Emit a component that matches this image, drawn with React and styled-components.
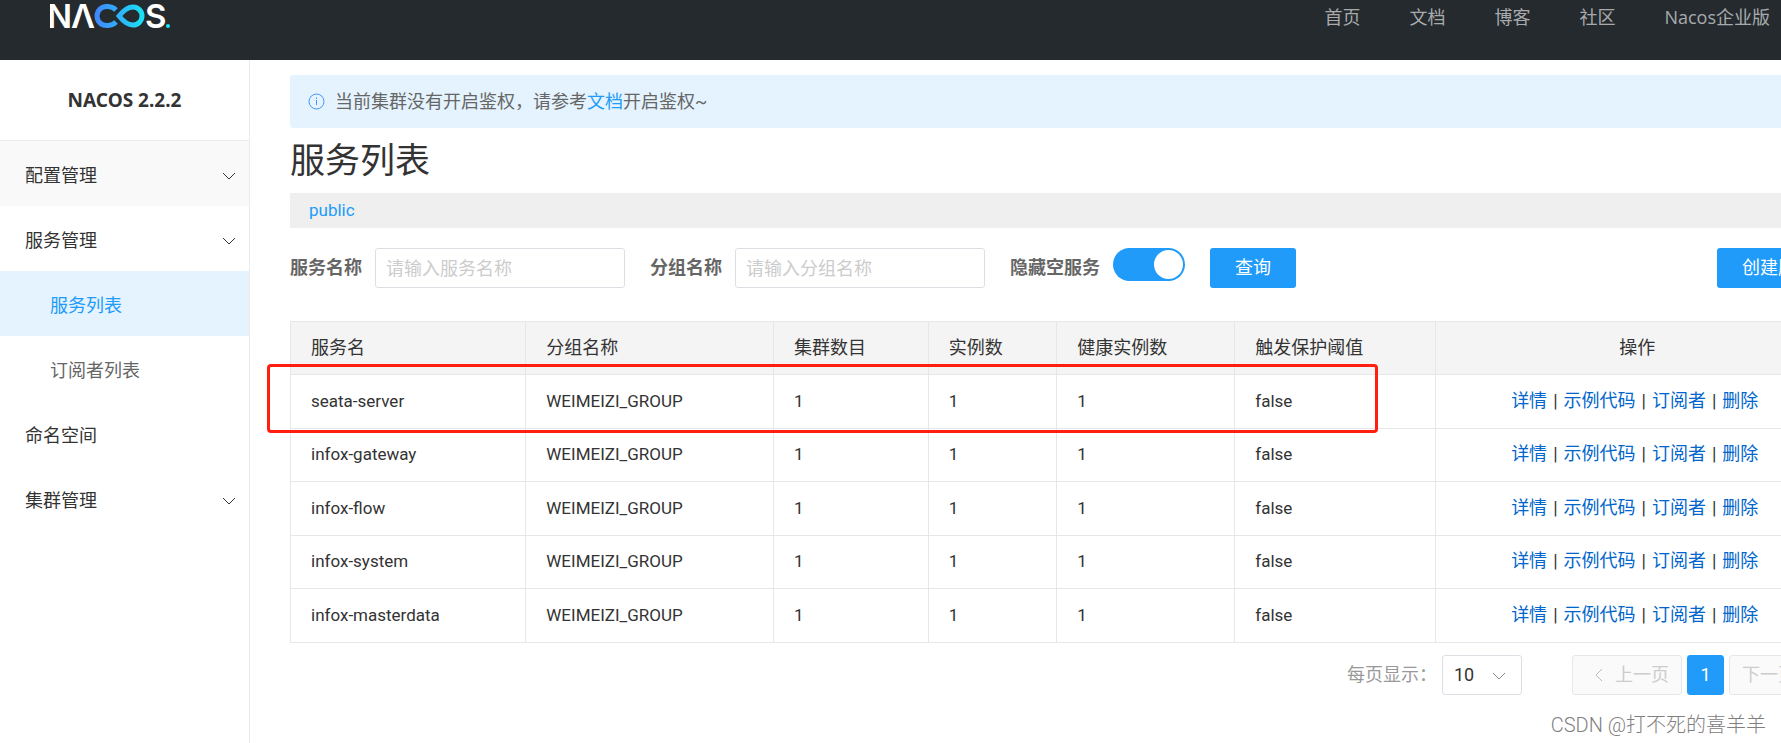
import styled, { createGlobalStyle } from "styled-components";

const GlobalStyle = createGlobalStyle`
    * {
        box-sizing: border-box;
    }
    body {
        margin: 0;
        overflow: hidden;
        background: #fff;
        color: #333;
        font-family: Roboto, 'Noto Sans CJK SC', sans-serif;
        font-size: 18px;
        font-weight: 400;
        line-height: 24px;
    }
    button, input, select {
        font: inherit;
    }
    a {
        text-decoration: none;
    }
`;

const Page = styled.div`
    position: relative;
    display: flex;
    flex-direction: column;
    min-height: 100vh;
    overflow: hidden;
`;

const Header = styled.header`
    display: flex;
    justify-content: space-between;
    align-items: flex-start;
    height: 60px;
    padding: 4px 11px 0 50px;
    background: #252a2f;
`;

const Nav = styled.nav`
    display: flex;
    gap: 49px;
    padding-top: 1px;
    a {
        color: #a8aaac;
        font-family: 'Open Sans', 'Noto Sans CJK SC', sans-serif;
    }
`;

const Body = styled.div`
    display: flex;
    flex: 1;
    width: calc(100% + 98px);
`;

const Sidebar = styled.aside`
    flex: none;
    width: 250px;
    border-right: 1px solid #ebebeb;
`;

const Version = styled.h1`
    margin: 0;
    height: 81px;
    border-bottom: 1px solid #ebebeb;
    font-family: 'Noto Sans', sans-serif;
    font-size: 19px;
    font-weight: 700;
    line-height: 80px;
    text-align: center;
`;

const Menu = styled.ul`
    margin: 0;
    padding: 0;
    list-style: none;
`;

const MenuLink = styled.a`
    display: flex;
    justify-content: space-between;
    align-items: center;
    height: 65px;
    padding: 4px 13px 0 ${(props) => (props.$sub ? "50px" : "25px")};
    background: ${(props) => (props.$active ? "#e4f3fe" : props.$shaded ? "#f9f9f9" : "#fff")};
    color: ${(props) => (props.$active ? "#209bfa" : props.$sub ? "#666" : "#333")};
`;

const Main = styled.main`
    flex: 1;
    min-width: 0;
    padding: 15px 40px 0;
`;

const Notice = styled.div`
    display: flex;
    align-items: center;
    gap: 10px;
    height: 53px;
    padding: 0 18px;
    border-radius: 3px;
    background: #e4f3fe;
    color: #666;
    a {
        color: #209bfa;
    }
`;

const Title = styled.h2`
    margin: 0;
    height: 65px;
    font-size: 35px;
    font-weight: 400;
    line-height: 68px;
`;

const Namespace = styled.div`
    height: 35px;
    padding: 0 19px;
    background: #efefef;
    color: #209bfa;
    font-size: 17px;
    line-height: 34px;
`;

const Search = styled.form`
    display: flex;
    align-items: flex-start;
    gap: 25px;
    margin: 20px 0 33px;
`;

const Field = styled.div`
    display: flex;
    label {
        width: ${(props) => (props.$wide ? "103px" : "85px")};
        color: #666;
        font-weight: 700;
        line-height: 40px;
        white-space: nowrap;
    }
`;

const TextInput = styled.input`
    width: 250px;
    height: 40px;
    padding: 0 10px;
    border: 1px solid #dcdee3;
    border-radius: 3px;
    outline: none;
    &::placeholder {
        color: #ccc;
    }
`;

const Switch = styled.input`
    appearance: none;
    display: flex;
    width: 72px;
    height: 33px;
    margin: 0;
    padding: 2px;
    border-radius: 17px;
    background: #ccc;
    cursor: pointer;
    &::before {
        content: "";
        width: 29px;
        height: 29px;
        border-radius: 50%;
        background: #fff;
    }
    &:checked {
        justify-content: flex-end;
        background: #209bfa;
    }
`;

const Button = styled.button`
    height: 40px;
    margin-left: ${(props) => (props.$end ? "auto" : "0")};
    padding: 0 25px;
    border: none;
    border-radius: 3px;
    background: #209bfa;
    color: #fff;
    cursor: pointer;
`;

const TableWrap = styled.div`
    position: relative;
`;

const Table = styled.table`
    width: 100%;
    table-layout: fixed;
    border-collapse: collapse;
    th, td {
        height: 54px;
        padding: 0 20px;
        border: 1px solid #e6e7eb;
        text-align: left;
    }
    th {
        height: 53px;
        background: #f4f4f4;
        font-weight: 400;
    }
    td {
        padding-bottom: 2px;
        font-size: 17px;
    }
    tbody tr:nth-child(even) td {
        height: 53px;
    }
    th:last-child, td:last-child {
        font-size: 18px;
        text-align: center;
    }
    td:last-child {
        padding-right: 25px;
    }
    td a {
        color: #0066cc;
    }
`;

const Col = styled.col`
    width: ${(props) => props.$width};
`;

const Divider = styled.span`
    margin: 0 6px;
`;

const Highlight = styled.div`
    position: absolute;
    top: 43px;
    left: -23px;
    right: 461px;
    height: 69px;
    border: 3px solid #ff1e10;
    border-radius: 4px;
    pointer-events: none;
`;

const Footer = styled.div`
    display: flex;
    justify-content: flex-end;
    align-items: center;
    gap: 5px;
    padding-top: 12px;
    label {
        color: #999;
    }
`;

const SelectBox = styled.div`
    position: relative;
    margin-right: 45px;
    select {
        appearance: none;
        display: block;
        width: 80px;
        height: 40px;
        padding: 0 11px;
        border: 1px solid #dcdee3;
        border-radius: 3px;
        background: #fff;
        color: #333;
    }
    svg {
        position: absolute;
        top: 17px;
        right: 16px;
        pointer-events: none;
    }
`;

const PageButton = styled.button`
    display: flex;
    justify-content: ${(props) => (props.$current ? "center" : "space-between")};
    align-items: center;
    width: ${(props) => (props.$current ? "37px" : "110px")};
    height: 40px;
    padding: ${(props) => (props.$current ? "0" : props.$next ? "0 22px 0 12px" : "0 12px 0 22px")};
    border: 1px solid ${(props) => (props.$current ? "#209bfa" : "#e6e7eb")};
    border-radius: 3px;
    background: ${(props) => (props.$current ? "#209bfa" : "#fafafa")};
    color: ${(props) => (props.$current ? "#fff" : "#ccc")};
`;

const Watermark = styled.div`
    position: absolute;
    right: 15px;
    bottom: 6px;
    color: #808080;
    font-size: 20px;
    font-weight: 300;
`;

const columns = [
    { title: "服务名", width: "15.2%" },
    { title: "分组名称", width: "16%" },
    { title: "集群数目", width: "10%" },
    { title: "实例数", width: "8.3%" },
    { title: "健康实例数", width: "11.5%" },
    { title: "触发保护阈值", width: "13%" },
    { title: "操作", width: "26%" },
];

const services = ["seata-server", "infox-gateway", "infox-flow", "infox-system", "infox-masterdata"];

const menu = [
    { text: "配置管理", arrow: true, shaded: true },
    { text: "服务管理", arrow: true },
    { text: "服务列表", sub: true, active: true },
    { text: "订阅者列表", sub: true },
    { text: "命名空间" },
    { text: "集群管理", arrow: true },
];

function Logo() {
    return (
        <svg width="122" height="26" viewBox="0 0 122 26" role="img" aria-label="Nacos">
            <defs>
                <linearGradient id="loop" gradientUnits="userSpaceOnUse" x1="45" y1="0" x2="95" y2="0">
                    <stop offset="0" stopColor="#4285ff" />
                    <stop offset="1" stopColor="#18e4f5" />
                </linearGradient>
            </defs>
            <g fill="#fff" fontFamily="Inter" fontWeight="600" fontSize="33">
                <text x="-3" y="24">N</text>
                <text x="21" y="24">Λ</text>
                <text x="95" y="24">S</text>
            </g>
            <g fill="none" stroke="url(#loop)" strokeWidth="5">
                <path d="M66 6 C62 2 54 1 50 5 C46 9 46 15 50 19 C54 23 62 22 66 18" />
                <path d="M69 12 C73 7 77 3 83 3 C88 3 92 7 92 12 C92 17 88 21 83 21 C77 21 73 17 69 12 Z" />
            </g>
            <circle cx="118" cy="22" r="2" fill="#18e4f5" />
        </svg>
    );
}

function ChevronDown({ color }) {
    return (
        <svg width="14" height="8" viewBox="0 0 14 8" fill="none" stroke={color}>
            <path d="M1 1l6 6 6-6" />
        </svg>
    );
}

function App() {
    return (
        <Page>
            <GlobalStyle />
            <Header>
                <Logo />
                <Nav>
                    <a href="#home">首页</a>
                    <a href="#docs">文档</a>
                    <a href="#blog">博客</a>
                    <a href="#community">社区</a>
                    <a href="#enterprise">Nacos企业版</a>
                </Nav>
            </Header>
            <Body>
                <Sidebar>
                    <Version>NACOS 2.2.2</Version>
                    <Menu>
                        {menu.map((item) => (
                            <li key={item.text}>
                                <MenuLink href="#menu" $sub={item.sub} $active={item.active} $shaded={item.shaded}>
                                    {item.text}
                                    {item.arrow && <ChevronDown color="#333" />}
                                </MenuLink>
                            </li>
                        ))}
                    </Menu>
                </Sidebar>
                <Main>
                    <Notice>
                        <svg width="17" height="17" viewBox="0 0 17 17" fill="none" stroke="#4494f9">
                            <circle cx="8.5" cy="8.5" r="7.5" />
                            <path d="M8.5 4.5v1.5M8.5 7v5" />
                        </svg>
                        <span>当前集群没有开启鉴权，请参考<a href="#auth">文档</a>开启鉴权~</span>
                    </Notice>
                    <Title>服务列表</Title>
                    <Namespace>public</Namespace>
                    <Search onSubmit={(e) => e.preventDefault()}>
                        <Field>
                            <label htmlFor="service">服务名称</label>
                            <TextInput id="service" placeholder="请输入服务名称" />
                        </Field>
                        <Field>
                            <label htmlFor="group">分组名称</label>
                            <TextInput id="group" placeholder="请输入分组名称" />
                        </Field>
                        <Field $wide>
                            <label htmlFor="hide">隐藏空服务</label>
                            <Switch id="hide" type="checkbox" defaultChecked />
                        </Field>
                        <Button type="submit">查询</Button>
                        <Button type="button" $end>创建服务</Button>
                    </Search>
                    <TableWrap>
                        <Table>
                            <colgroup>
                                {columns.map((col) => (
                                    <Col key={col.title} $width={col.width} />
                                ))}
                            </colgroup>
                            <thead>
                                <tr>
                                    {columns.map((col) => (
                                        <th key={col.title}>{col.title}</th>
                                    ))}
                                </tr>
                            </thead>
                            <tbody>
                                {services.map((name) => (
                                    <tr key={name}>
                                        <td>{name}</td>
                                        <td>WEIMEIZI_GROUP</td>
                                        <td>1</td>
                                        <td>1</td>
                                        <td>1</td>
                                        <td>false</td>
                                        <td>
                                            <a href="#detail">详情</a>
                                            <Divider>|</Divider>
                                            <a href="#code">示例代码</a>
                                            <Divider>|</Divider>
                                            <a href="#subscriber">订阅者</a>
                                            <Divider>|</Divider>
                                            <a href="#delete">删除</a>
                                        </td>
                                    </tr>
                                ))}
                            </tbody>
                        </Table>
                        <Highlight />
                    </TableWrap>
                    <Footer>
                        <label htmlFor="size">每页显示：</label>
                        <SelectBox>
                            <select id="size" defaultValue="10">
                                <option>10</option>
                                <option>20</option>
                            </select>
                            <ChevronDown color="#888" />
                        </SelectBox>
                        <PageButton type="button" disabled>
                            <svg width="8" height="14" viewBox="0 0 8 14" fill="none" stroke="#bbb">
                                <path d="M7 1L1 7l6 6" />
                            </svg>
                            上一页
                        </PageButton>
                        <PageButton type="button" $current>1</PageButton>
                        <PageButton type="button" $next disabled>
                            下一页
                            <svg width="8" height="14" viewBox="0 0 8 14" fill="none" stroke="#bbb">
                                <path d="M1 1l6 6-6 6" />
                            </svg>
                        </PageButton>
                    </Footer>
                </Main>
            </Body>
            <Watermark>CSDN @打不死的喜羊羊</Watermark>
        </Page>
    );
}

export default App;
